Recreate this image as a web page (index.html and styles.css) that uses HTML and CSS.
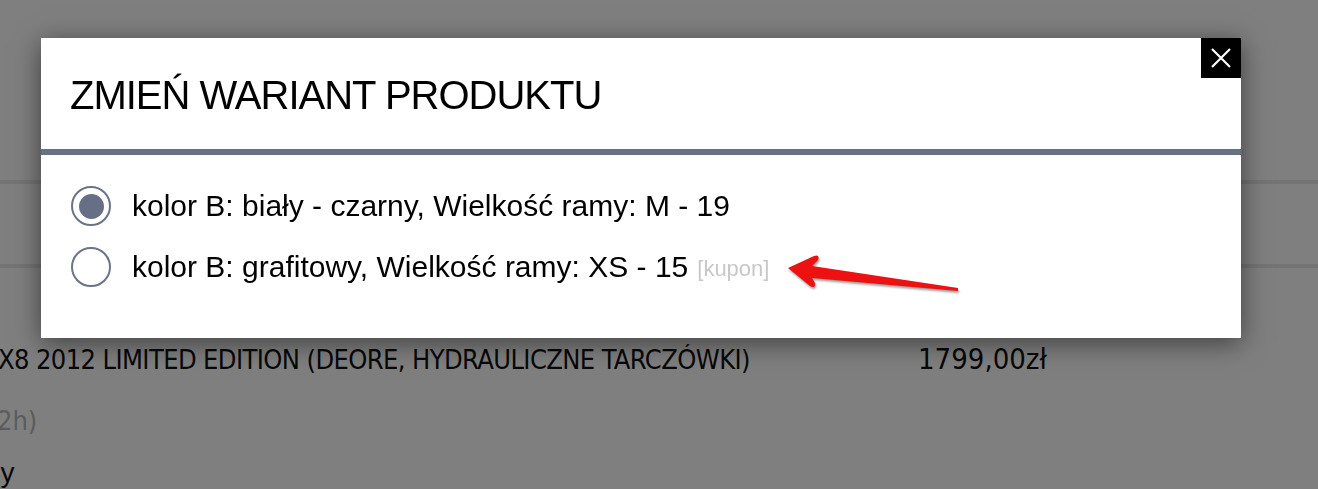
FILE: index.html
```html
<!DOCTYPE html>
<html lang="pl">
<head>
    <meta charset="UTF-8">
    <meta name="viewport" content="width=device-width, initial-scale=1.0">
    <title>Zmień wariant produktu</title>
    <link rel="stylesheet" href="styles.css">
</head>
<body>
    <div class="page">
        <div class="rule rule-top"></div>
        <div class="rule rule-bottom"></div>
        <div class="product-row">
            <span class="product-name">X8 2012 LIMITED EDITION (DEORE, HYDRAULICZNE TARCZÓWKI)</span>
            <span class="product-price">1799,00zł</span>
        </div>
        <div class="product-note">2h)</div>
        <div class="product-extra">ny</div>
    </div>

    <div class="overlay"></div>

    <div class="modal">
        <button class="modal-close" aria-label="Zamknij">
            <svg width="20" height="20" viewBox="0 0 20 20">
                <path d="M1 1 L19 19 M19 1 L1 19" stroke="#fff" stroke-width="2.2" fill="none"/>
            </svg>
        </button>
        <div class="modal-header">
            <h2 class="modal-title">ZMIEŃ WARIANT PRODUKTU</h2>
        </div>
        <div class="modal-body">
            <label class="variant">
                <span class="radio checked"></span>
                <span class="variant-text">kolor B: biały - czarny, Wielkość ramy: M - 19</span>
            </label>
            <label class="variant">
                <span class="radio"></span>
                <span class="variant-text">kolor B: grafitowy, Wielkość ramy: XS - 15</span>
                <span class="coupon">[kupon]</span>
            </label>
        </div>
    </div>

    <svg class="arrow" width="190" height="50" viewBox="0 0 190 50">
        <path d="M8 18 L34 6 Q40 4 38 10 L32 16 L178 38 L178 41 L32 28 L35 33 Q36 39 30 36 Z" fill="#ee1111"/>
    </svg>
</body>
</html>
```

FILE: styles.css
```css
body {
    margin: 0;
    font-family: "Liberation Sans", Arial, sans-serif;
    background: #fff;
    overflow: hidden;
}
.page {
    height: 489px;
    display: flex;
    flex-direction: column;
}
.rule {
    height: 4px;
    background: #e8e8e8;
}
.rule-top { margin-top: 180px; }
.rule-bottom { margin-top: 80px; }
.product-row {
    display: flex;
    margin-top: 74px;
    font-family: "DejaVu Sans", sans-serif;
    font-stretch: condensed;
    font-size: 27px;
    letter-spacing: -0.6px;
    color: #111;
    height: 34px;
    align-items: center;
}
.product-name {
    width: 920px;
    margin-left: -2px;
}
.product-price {
    font-size: 29px;
    letter-spacing: 0;
}
.product-note {
    margin-top: 29px;
    font-family: "DejaVu Sans", sans-serif;
    font-stretch: condensed;
    font-size: 27px;
    color: #b8b8b8;
    margin-left: -3px;
}
.product-extra {
    margin-top: 21px;
    font-size: 28px;
    color: #111;
    margin-left: -15px;
}
.overlay {
    position: fixed;
    inset: 0;
    background: rgba(0, 0, 0, 0.5);
}
.modal {
    position: absolute;
    left: 41px;
    top: 38px;
    width: 1200px;
    height: 300px;
    background: #fff;
    box-shadow: 0 5px 25px rgba(0, 0, 0, 0.5);
}
.modal-close {
    position: absolute;
    top: 0;
    right: 0;
    width: 40px;
    height: 40px;
    border: none;
    padding: 0;
    background: #000;
    display: flex;
    align-items: center;
    justify-content: center;
    cursor: pointer;
}
.modal-header {
    height: 111px;
    display: flex;
    align-items: center;
    padding-left: 29px;
    border-bottom: 6px solid #677186;
}
.modal-title {
    margin: 0 0 -4px;
    font-weight: normal;
    font-size: 40px;
    letter-spacing: -1px;
    color: #000;
}
.modal-body {
    padding: 32px 30px 0;
    display: flex;
    flex-direction: column;
    gap: 23px;
}
.variant {
    display: flex;
    align-items: center;
    height: 38px;
    cursor: pointer;
}
.radio {
    width: 36px;
    height: 36px;
    border: 2px solid #6b7386;
    border-radius: 50%;
    display: flex;
    align-items: center;
    justify-content: center;
    margin-right: 21px;
}
.radio.checked::after {
    content: "";
    width: 25px;
    height: 25px;
    border-radius: 50%;
    background: #666f86;
}
.variant-text {
    font-size: 30px;
    color: #000;
}
.coupon {
    font-size: 22px;
    color: #c8c8c8;
    margin-left: 9px;
    margin-top: 4px;
}
.arrow {
    position: absolute;
    left: 780px;
    top: 250px;
    filter: drop-shadow(1px 2px 1px rgba(0, 0, 0, 0.4));
}
```
